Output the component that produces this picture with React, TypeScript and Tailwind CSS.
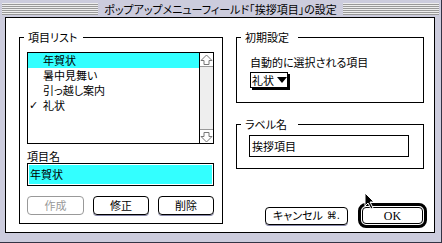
import React from "react";

const jp = "font-['Noto_Sans_CJK_JP',sans-serif] [font-feature-settings:'palt']";

function ArrowBox({ down }: { down?: boolean }) {
  return (
    <div className={`h-[14px] bg-white flex items-center justify-center ${down ? "border-t border-[#999]" : "border-b border-[#999]"}`}>
      <svg width="13" height="12" viewBox="0 0 13 12">
        <polygon
          points={down ? "6.5,11 12,5.5 9,5.5 9,1.5 4,1.5 4,5.5 1,5.5" : "6.5,1 12,6.5 9,6.5 9,10.5 4,10.5 4,6.5 1,6.5"}
          fill="none"
          stroke="#777"
          strokeWidth="1"
        />
      </svg>
    </div>
  );
}

function Group({ label, className, children }: { label: string; className: string; children: React.ReactNode }) {
  return (
    <div className={`relative border border-black ${className}`}>
      <span className="absolute -top-[8px] left-[4px] min-w-[57px] h-[15px] bg-white pl-[4px] pr-[6px] text-[11px] leading-[15px] whitespace-nowrap">
        {label}
      </span>
      {children}
    </div>
  );
}

function Btn({ children, disabled, className = "" }: { children: React.ReactNode; disabled?: boolean; className?: string }) {
  return (
    <div
      className={`h-[19px] rounded-[4px] border flex items-center justify-center text-[11px] leading-none whitespace-nowrap ${
        disabled ? "border-[#999] text-[#999]" : "border-black text-black shadow-[0_1px_0_#8888aa]"
      } ${className}`}
    >
      {children}
    </div>
  );
}

export default function App() {
  const rows = [
    { t: "年賀状", sel: true },
    { t: "暑中見舞い" },
    { t: "引っ越し案内" },
    { t: "礼状", check: true },
  ];
  return (
    <div className={`relative w-[442px] h-[243px] bg-[#ccccdd] border-r border-b border-[#333344] flex flex-col ${jp}`}>
      {/* title bar */}
      <div className="h-[17px] px-[2px] pt-[3px] pb-[2px] flex">
        <div className="flex-1 h-[12px] bg-[repeating-linear-gradient(to_bottom,#eeeeee_0px,#eeeeee_1px,#999999_1px,#999999_2px)] flex justify-center">
          <div className="bg-[#ccccdd] px-[6px] text-[11px] leading-[12px] text-black whitespace-nowrap">
            ポップアップメニューフィールド「挨拶項目」の設定
          </div>
        </div>
      </div>

      {/* content */}
      <div className="ml-[5px] w-[430px] h-[216px] border border-black bg-white flex gap-[13px] pl-[13px] pt-[19px]">
        <Group label="項目リスト" className="w-[204px] h-[187px] pl-[7px] pt-[14px]">
          <div className="w-[187px] h-[92px] border border-black flex">
            <div className="flex-1">
              {rows.map((r) => (
                <div key={r.t} className={`h-[15px] flex items-center text-[11px] leading-none whitespace-nowrap ${r.sel ? "bg-[#33ffff]" : ""}`}>
                  <span className="w-[15px] pl-[1px] font-['DejaVu_Sans',sans-serif] text-[11px]">{r.check ? "✓" : ""}</span>
                  <span>{r.t}</span>
                </div>
              ))}
            </div>
            <div className="w-[14px] border-l border-black bg-[#eeeeee] flex flex-col justify-between">
              <ArrowBox />
              <ArrowBox down />
            </div>
          </div>
          <div className="mt-[5px] h-[14px] text-[11px] leading-[14px]">項目名</div>
          <div className="w-[187px] h-[23px] border border-black p-[1px]">
            <div className="h-full bg-[#33ffff] flex items-center pl-[1px] text-[11px] leading-none">年賀状</div>
          </div>
          <div className="mt-[10px] w-[187px] flex justify-between">
            <Btn disabled className="w-[57px]">作成</Btn>
            <Btn className="w-[56px]">修正</Btn>
            <Btn className="w-[56px]">削除</Btn>
          </div>
        </Group>

        <div className="w-[188px] flex flex-col">
          <Group label="初期設定" className="h-[66px] pl-[13px] pt-[17px]">
            <div className="h-[14px] text-[11px] leading-[14px] whitespace-nowrap">自動的に選択される項目</div>
            <div className="mt-[3px] w-[38px] h-[16px] border border-black shadow-[2px_2px_0_#000] flex items-center pl-[1px] text-[11px] leading-none whitespace-nowrap">
              <span>礼状</span>
              <svg width="10" height="6" viewBox="0 0 10 6" className="ml-[3px] shrink-0">
                <polygon points="0,0 10,0 5,6" fill="#000" />
              </svg>
            </div>
          </Group>

          <Group label="ラベル名" className="mt-[21px] h-[45px] pl-[12px] pt-[10px]">
            <div className="w-[160px] h-[22px] border border-black flex items-center pl-[2px] text-[11px] leading-none">挨拶項目</div>
          </Group>

          <div className="mt-[34px] pl-[29px] flex items-center gap-[10px]">
            <div className="w-[83px] h-[18px] rounded-[4px] border border-black shadow-[0_1px_0_#8888aa] flex items-center justify-center text-[11px] leading-none whitespace-nowrap shrink-0">
              キャンセル<span className="ml-[4px] font-['DejaVu_Sans',sans-serif] text-[10px]">⌘.</span>
            </div>
            <div className="w-[69px] h-[25px] rounded-[8px] border-[3px] border-black p-[1px] shrink-0">
              <div className="h-full rounded-[4px] border border-black flex items-center justify-center font-['Liberation_Serif',serif] text-[12px] leading-none">
                OK
              </div>
            </div>
          </div>
        </div>
      </div>

      {/* mouse cursor */}
      <svg className="absolute left-[364px] top-[192px]" width="12" height="18" viewBox="0 0 12 18">
        <polygon points="1,1 1,14 4,11 7,17 9,16 6,10 10,10" fill="#000" stroke="#fff" strokeWidth="1" />
      </svg>
    </div>
  );
}
